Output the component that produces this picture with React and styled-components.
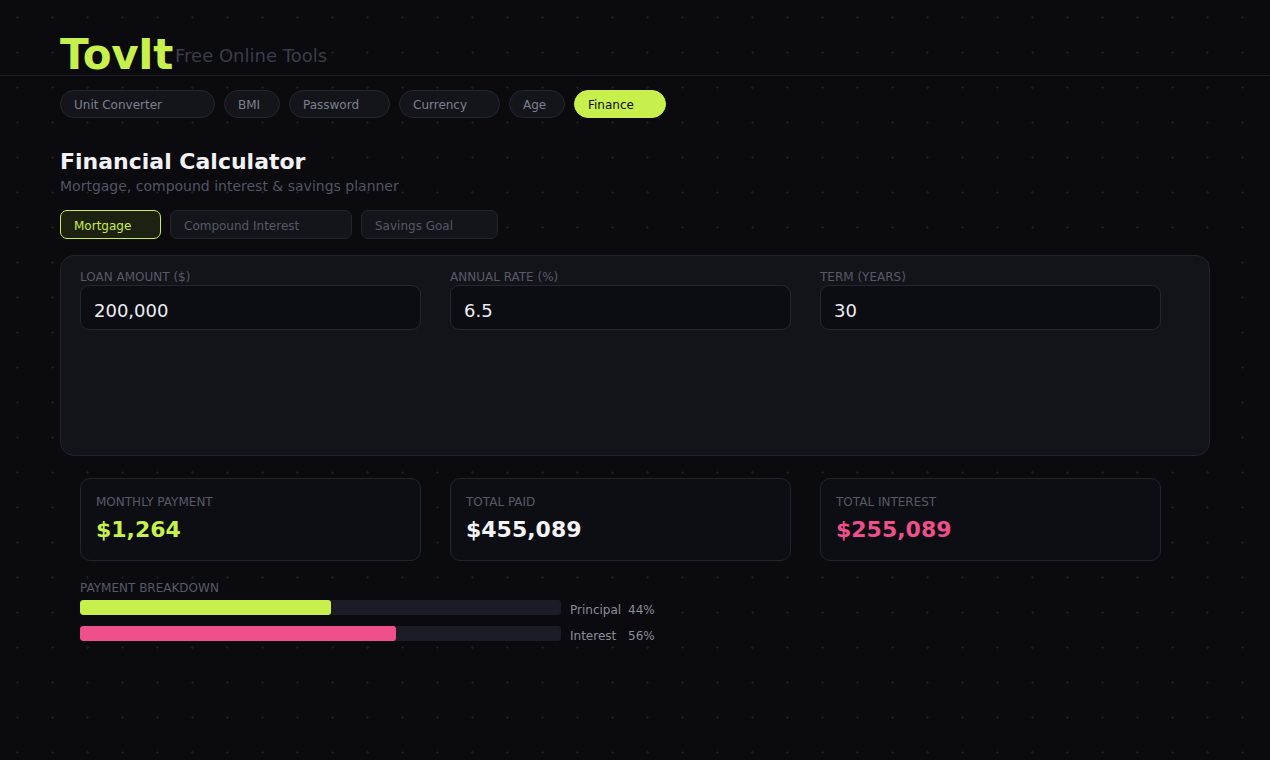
import styled, { createGlobalStyle } from 'styled-components';

const GlobalStyle = createGlobalStyle`
  html, body {
    margin: 0;
    padding: 0;
    background-color: #0a0a0f;
    background-image: radial-gradient(circle, #1a1b23 1px, transparent 1.2px);
    background-size: 35px 35px;
    background-position: 0 0;
    min-height: 100vh;
    font-family: "DejaVu Sans", "Noto Sans", sans-serif;
    color: #e8e9ee;
  }
  * { box-sizing: border-box; }
`;

const Header = styled.header`
  display: flex;
  align-items: center;
  height: 76px;
  padding: 34px 60px 0;
  border-bottom: 1px solid #1b1c24;
`;

const Logo = styled.div`
  font-size: 42px;
  line-height: 40px;
  font-weight: 700;
  letter-spacing: -0.4px;
  color: #c8f04c;
`;

const Tagline = styled.div`
  font-size: 18px;
  color: #3b3d48;
  margin-left: 2px;
  padding-top: 2px;
`;

const Page = styled.main`
  max-width: 1150px;
  margin: 0 auto;
`;

const Nav = styled.nav`
  display: flex;
  gap: 9px;
  margin-top: 14px;
`;

const Pill = styled.button`
  height: 28px;
  width: ${(p) => p.$w}px;
  padding: 2px 13px 0;
  text-align: left;
  border-radius: 14px;
  font-family: inherit;
  font-size: 12px;
  border: 1px solid ${(p) => (p.$active ? '#c8f04c' : '#25262f')};
  background: ${(p) => (p.$active ? '#c8f04c' : '#14151b')};
  color: ${(p) => (p.$active ? '#0a0a0f' : '#7d808c')};
`;

const Title = styled.h1`
  margin: 31px 0 0;
  font-size: 22px;
  font-weight: 700;
  color: #f2f2f5;
  line-height: normal;
`;

const Subtitle = styled.p`
  margin: 4px 0 0;
  font-size: 14px;
  color: #525562;
`;

const Tabs = styled.div`
  display: flex;
  gap: 9px;
  margin-top: 16px;
`;

const Tab = styled.button`
  height: 29px;
  width: ${(p) => p.$w}px;
  padding: 2px 13px 0;
  text-align: left;
  border-radius: 7px;
  font-family: inherit;
  font-size: 12px;
  border: 1px solid ${(p) => (p.$active ? '#c8f04c' : '#23242d')};
  background: ${(p) => (p.$active ? '#1c2111' : '#14151b')};
  color: ${(p) => (p.$active ? '#c8f04c' : '#555866')};
`;

const Card = styled.section`
  margin-top: 16px;
  height: 201px;
  padding: 14px 19px;
  border-radius: 14px;
  background: #13141a;
  border: 1px solid #22232c;
`;

const Grid = styled.div`
  display: grid;
  grid-template-columns: repeat(3, 341px);
  column-gap: 29px;
`;

const Field = styled.label`
  display: flex;
  flex-direction: column;
  gap: 1px;
`;

const Label = styled.span`
  font-size: 12px;
  text-transform: uppercase;
  color: #575a66;
  line-height: 14px;
`;

const Input = styled.div`
  height: 45px;
  display: flex;
  align-items: center;
  padding: 6px 13px 0;
  border-radius: 9px;
  background: #0c0d12;
  border: 1px solid #252630;
  font-size: 18px;
  color: #eceef2;
`;

const Results = styled.div`
  padding: 22px 20px 0;
`;

const Stat = styled.div`
  height: 83px;
  padding: 16px 15px;
  border-radius: 10px;
  background: #0d0e14;
  border: 1px solid #23242d;
  display: flex;
  flex-direction: column;
  gap: 8px;
`;

const StatValue = styled.div`
  font-size: 22px;
  font-weight: 700;
  color: ${(p) => p.$color};
`;

const Breakdown = styled.div`
  margin-top: 20px;
  display: flex;
  flex-direction: column;
`;

const BarRow = styled.div`
  display: flex;
  align-items: center;
  height: 15px;
  margin-top: ${(p) => (p.$first ? 5 : 11)}px;
`;

const Track = styled.div`
  width: 481px;
  height: 15px;
  border-radius: 3px;
  background: #1b1c26;
  overflow: hidden;
`;

const Fill = styled.div`
  height: 100%;
  border-radius: 3px;
  background: ${(p) => p.$color};
`;

const BarLabel = styled.span`
  margin-left: 9px;
  padding-top: 4px;
  width: 58px;
  font-size: 12px;
  color: #8a8d99;
`;

const BarPct = styled.span`
  padding-top: 4px;
  font-size: 12px;
  color: #8a8d99;
`;

const navItems = [
  ['Unit Converter', 155],
  ['BMI', 56],
  ['Password', 101],
  ['Currency', 101],
  ['Age', 56],
  ['Finance', 92],
];

const bars = [
  { name: 'Principal', pct: '44%', fill: 251, color: '#c8f04c' },
  { name: 'Interest', pct: '56%', fill: 316, color: '#ef4f8a' },
];

const App = () => {
  return (
    <>
      <GlobalStyle />
      <Header>
        <Logo>TovIt</Logo>
        <Tagline>Free Online Tools</Tagline>
      </Header>
      <Page>
        <Nav>
          {navItems.map(([name, w]) => (
            <Pill key={name} $w={w} $active={name === 'Finance'}>
              {name}
            </Pill>
          ))}
        </Nav>
        <Title>Financial Calculator</Title>
        <Subtitle>Mortgage, compound interest &amp; savings planner</Subtitle>
        <Tabs>
          <Tab $w={101} $active>Mortgage</Tab>
          <Tab $w={182}>Compound Interest</Tab>
          <Tab $w={137}>Savings Goal</Tab>
        </Tabs>
        <Card>
          <Grid>
            <Field>
              <Label>Loan Amount ($)</Label>
              <Input>200,000</Input>
            </Field>
            <Field>
              <Label>Annual Rate (%)</Label>
              <Input>6.5</Input>
            </Field>
            <Field>
              <Label>Term (Years)</Label>
              <Input>30</Input>
            </Field>
          </Grid>
        </Card>
        <Results>
          <Grid>
            <Stat>
              <Label>Monthly Payment</Label>
              <StatValue $color="#c8f04c">$1,264</StatValue>
            </Stat>
            <Stat>
              <Label>Total Paid</Label>
              <StatValue $color="#f4f4f7">$455,089</StatValue>
            </Stat>
            <Stat>
              <Label>Total Interest</Label>
              <StatValue $color="#ef4f8a">$255,089</StatValue>
            </Stat>
          </Grid>
          <Breakdown>
            <Label>Payment Breakdown</Label>
            {bars.map((b, i) => (
              <BarRow key={b.name} $first={i === 0}>
                <Track>
                  <Fill $color={b.color} style={{ width: b.fill }} />
                </Track>
                <BarLabel>{b.name}</BarLabel>
                <BarPct>{b.pct}</BarPct>
              </BarRow>
            ))}
          </Breakdown>
        </Results>
      </Page>
    </>
  );
};

export default App;
